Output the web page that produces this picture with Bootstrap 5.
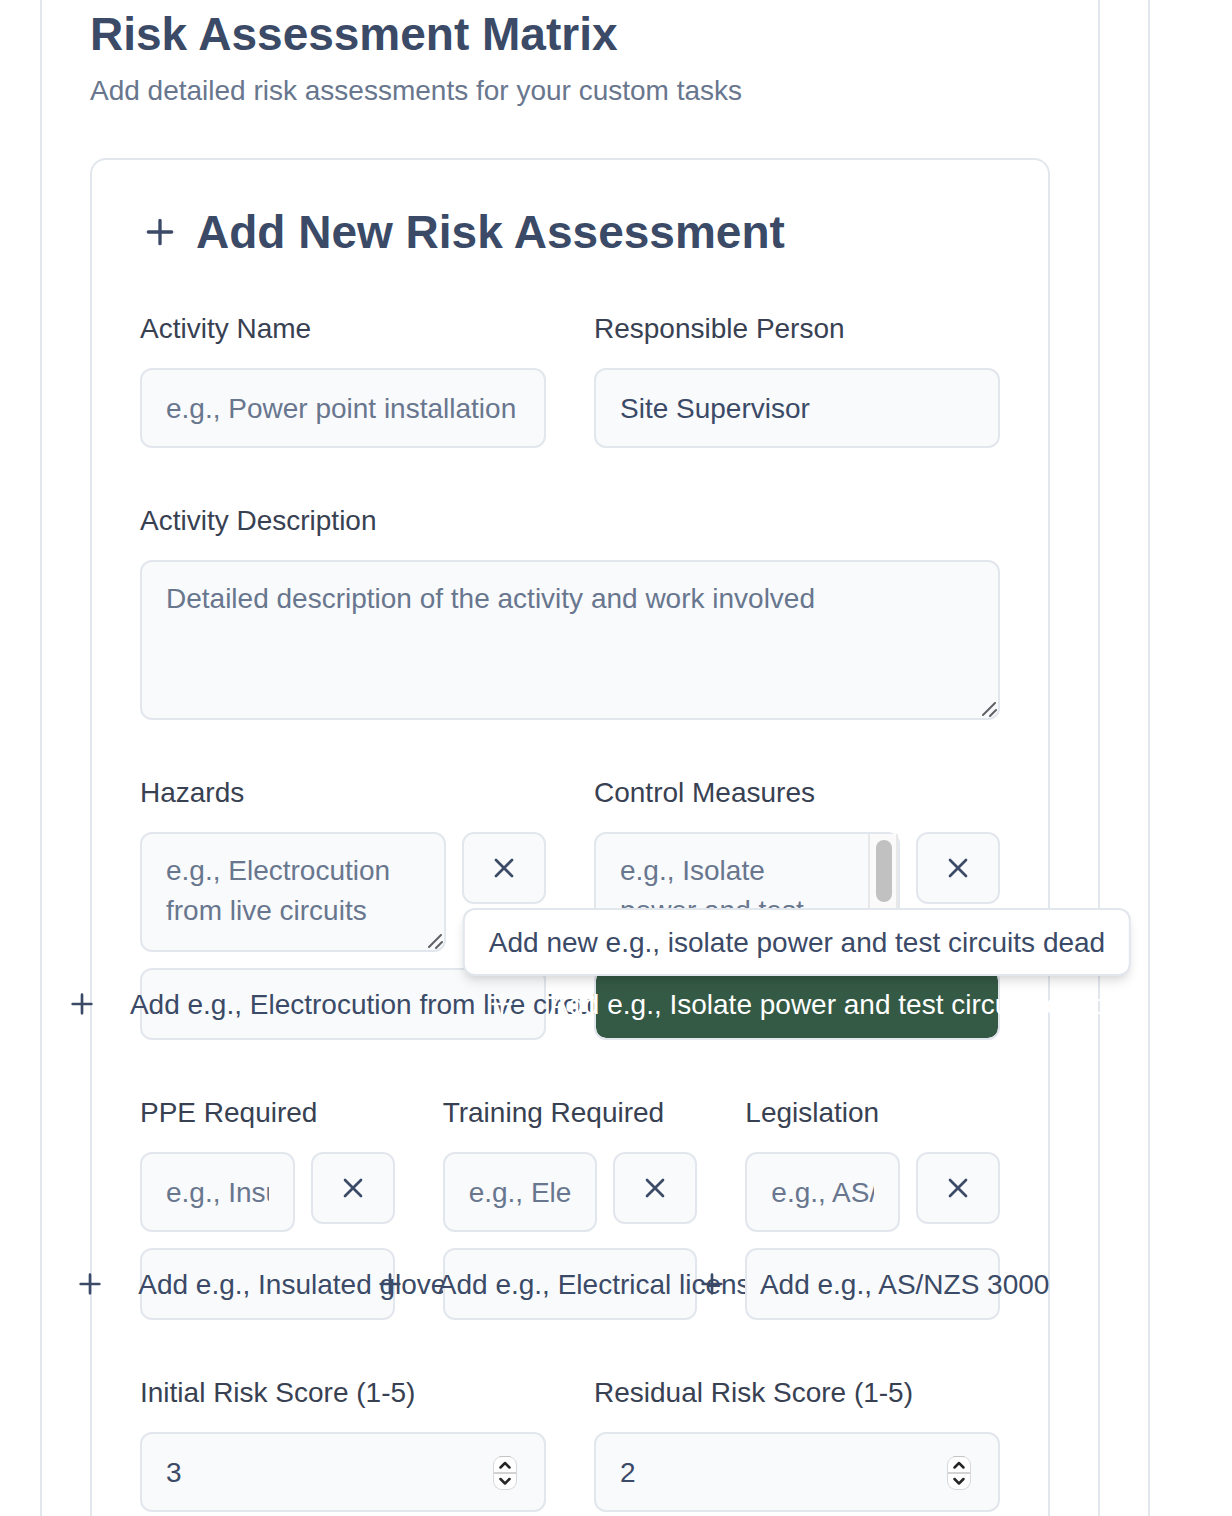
<!DOCTYPE html>
<html lang="en">
<head>
<meta charset="utf-8">
<meta name="viewport" content="width=device-width, initial-scale=1">
<title>Risk Assessment Matrix</title>
<link href="https://cdn.jsdelivr.net/npm/bootstrap@5.3.0/dist/css/bootstrap.min.css" rel="stylesheet">
<style>
  :root { --ink: #3b4a66; --label: #384152; --muted: #68768e; --line: #e2e6ed; --field: #f9fafc; --green: #345944; }
  body { font-family: "Liberation Sans", Arial, sans-serif; font-size: 28px; line-height: 40px; color: var(--ink); background: #fff; }
  .page-shell { min-height: 100vh; padding-right: 82px; }
  .outer-frame { border-right: 2px solid var(--line); padding: 0 48px 0 40px; }
  .inner-frame { border: solid var(--line); border-width: 0 2px; padding: 10px 48px 0; }
  .section-title { font-size: 46px; line-height: 48px; font-weight: 700; margin: 0; }
  .section-note { color: var(--muted); line-height: 42px; margin: 12px 0 46px; }
  .panel { border: 2px solid var(--line); border-bottom: 0; border-radius: 16px 16px 0 0; padding: 48px 48px 0; }
  .stack { display: flex; flex-direction: column; gap: 48px; }
  .gap-16 { gap: 16px; }
  .wide-row { --bs-gutter-x: 48px; }
  .field-label { display: block; color: var(--label); line-height: 50px; margin-bottom: 14px; }
  .field.form-control { font-size: 28px; line-height: 40px; color: var(--ink); background: var(--field); border: 2px solid var(--line); border-radius: 12px; padding: 20px 24px 18px; height: 80px; min-width: 0; }
  .field.form-control::placeholder { color: var(--muted); opacity: 1; }
  textarea.field.form-control { padding: 17px 24px 15px; resize: none; overflow: hidden; display: block; min-height: 0; }
  textarea.field.form-control.tall { height: 160px; }
  textarea.field.form-control.short { height: 120px; }
  textarea.field.form-control.scrolls { padding-right: 54px; }
  input[type=number].field { appearance: textfield; -moz-appearance: textfield; }
  input[type=number].field::-webkit-inner-spin-button { -webkit-appearance: none; margin: 0; }
  .soft.btn { font-size: 28px; line-height: 40px; color: var(--ink); background: var(--field); border: 2px solid var(--line); border-radius: 12px; height: 72px; padding: 0 24px; white-space: nowrap; background-clip: padding-box; }
  .remove.btn { width: 84px; flex: none; }
  .add.btn { display: flex; align-items: center; justify-content: center; gap: 32px; width: 100%; }
  .add.btn span { line-height: 38px; padding-top: 2px; }
  .add.is-hot.btn { background-color: var(--green); color: #fff; }
  .stroke { fill: none; stroke: currentColor; stroke-width: 2; stroke-linecap: round; stroke-linejoin: round; flex: none; display: block; }
  .grip { position: absolute; right: 2px; bottom: 2px; width: 16px; height: 16px; fill: none; stroke: #5f6164; stroke-width: 2; stroke-linecap: round; }
  .spinner { position: absolute; right: 28px; top: 22px; width: 26px; height: 38px; }
  .scroll-track { position: absolute; right: 2px; top: 2px; bottom: 2px; width: 30px; background: #fafafa; border: solid #e8e8e8; border-width: 0 2px; padding: 6px; }
  .scroll-thumb { height: 62px; width: 16px; margin: 0 auto; border-radius: 8px; background: #c1c1c1; }
  .hint { position: absolute; z-index: 10; left: 50%; bottom: 100%; transform: translateX(-50%); margin-bottom: -8px; white-space: nowrap; background: #fff; border: 2px solid var(--line); border-radius: 12px; padding: 13px 24px 11px; box-shadow: 0 8px 12px -2px rgba(0,0,0,.1), 0 4px 8px -4px rgba(0,0,0,.1); }
</style>
</head>
<body>
<svg width="0" height="0" class="position-absolute" aria-hidden="true">
  <symbol id="plus" viewBox="0 0 24 24"><path d="M5 12h14M12 5v14"/></symbol>
  <symbol id="cross" viewBox="0 0 24 24"><path d="M18 6 6 18M6 6l12 12"/></symbol>
  <symbol id="handle" viewBox="0 0 16 16"><path d="M1 13 13 1M8 14l6-6"/></symbol>
  <symbol id="steps" viewBox="0 0 26 38">
    <rect x="1" y="2" width="24" height="34" rx="9" fill="#d8d8da"/>
    <rect x="2" y="3" width="22" height="32" rx="8" fill="#fff"/>
    <path d="M8 2.500h10" stroke="#c4c4c6" stroke-linecap="round"/>
    <path d="M2 19h22" stroke="#d2d2d3" stroke-width="2"/>
    <path d="m8.500 13.500 4.500-4.500 4.500 4.500M8.500 25l4.500 4.500 4.500-4.500" fill="none" stroke="#262626" stroke-width="2.500" stroke-linecap="round" stroke-linejoin="round"/>
  </symbol>
</svg>
<div class="page-shell d-flex">
  <div class="outer-frame d-flex flex-fill">
    <main class="inner-frame d-flex flex-column flex-fill">
      <h2 class="section-title">Risk Assessment Matrix</h2>
      <p class="section-note">Add detailed risk assessments for your custom tasks</p>
      <form class="panel stack flex-fill">
        <div class="d-flex align-items-center gap-16">
          <svg class="stroke" width="40" height="40" aria-hidden="true"><use href="#plus"/></svg>
          <h3 class="section-title">Add New Risk Assessment</h3>
        </div>

        <div class="row wide-row">
          <div class="col-6">
            <label class="field-label" for="activity">Activity Name</label>
            <input class="field form-control" id="activity" type="text" placeholder="e.g., Power point installation">
          </div>
          <div class="col-6">
            <label class="field-label" for="person">Responsible Person</label>
            <input class="field form-control" id="person" type="text" value="Site Supervisor">
          </div>
        </div>

        <div>
          <label class="field-label" for="description">Activity Description</label>
          <div class="position-relative">
            <textarea class="field form-control tall" id="description" placeholder="Detailed description of the activity and work involved"></textarea>
            <svg class="grip" aria-hidden="true"><use href="#handle"/></svg>
          </div>
        </div>

        <div class="row wide-row">
          <div class="col-6">
            <label class="field-label" for="hazards">Hazards</label>
            <div class="d-flex flex-column gap-16">
              <div class="d-flex align-items-start gap-16">
                <div class="position-relative flex-fill">
                  <textarea class="field form-control short" id="hazards" placeholder="e.g., Electrocution from live circuits"></textarea>
                  <svg class="grip" aria-hidden="true"><use href="#handle"/></svg>
                </div>
                <button class="soft remove btn d-flex align-items-center justify-content-center" type="button" aria-label="Remove hazard"><svg class="stroke" width="32" height="32"><use href="#cross"/></svg></button>
              </div>
              <button class="soft add btn" type="button"><svg class="stroke" width="32" height="32"><use href="#plus"/></svg><span>Add e.g., Electrocution from live circuits</span></button>
            </div>
          </div>
          <div class="col-6">
            <label class="field-label" for="controls">Control Measures</label>
            <div class="d-flex flex-column gap-16">
              <div class="d-flex align-items-start gap-16">
                <div class="position-relative flex-fill">
                  <textarea class="field form-control short scrolls" id="controls" placeholder="e.g., Isolate power and test circuits dead"></textarea>
                  <div class="scroll-track" aria-hidden="true"><div class="scroll-thumb"></div></div>
                </div>
                <button class="soft remove btn d-flex align-items-center justify-content-center" type="button" aria-label="Remove control measure"><svg class="stroke" width="32" height="32"><use href="#cross"/></svg></button>
              </div>
              <div class="position-relative">
                <button class="soft add is-hot btn" type="button" aria-describedby="add-hint"><svg class="stroke" width="32" height="32"><use href="#plus"/></svg><span>Add e.g., Isolate power and test circuits dead</span></button>
                <div class="hint" id="add-hint" role="tooltip">Add new e.g., isolate power and test circuits dead</div>
              </div>
            </div>
          </div>
        </div>

        <div class="row wide-row">
          <div class="col-4">
            <label class="field-label" for="ppe">PPE Required</label>
            <div class="d-flex flex-column gap-16">
              <div class="d-flex align-items-start gap-16">
                <input class="field form-control" id="ppe" type="text" placeholder="e.g., Insulated gloves">
                <button class="soft remove btn d-flex align-items-center justify-content-center" type="button" aria-label="Remove PPE"><svg class="stroke" width="32" height="32"><use href="#cross"/></svg></button>
              </div>
              <button class="soft add btn" type="button"><svg class="stroke" width="32" height="32"><use href="#plus"/></svg><span>Add e.g., Insulated gloves</span></button>
            </div>
          </div>
          <div class="col-4">
            <label class="field-label" for="training">Training Required</label>
            <div class="d-flex flex-column gap-16">
              <div class="d-flex align-items-start gap-16">
                <input class="field form-control" id="training" type="text" placeholder="e.g., Electrical license">
                <button class="soft remove btn d-flex align-items-center justify-content-center" type="button" aria-label="Remove training"><svg class="stroke" width="32" height="32"><use href="#cross"/></svg></button>
              </div>
              <button class="soft add btn" type="button"><svg class="stroke" width="32" height="32"><use href="#plus"/></svg><span>Add e.g., Electrical license</span></button>
            </div>
          </div>
          <div class="col-4">
            <label class="field-label" for="legislation">Legislation</label>
            <div class="d-flex flex-column gap-16">
              <div class="d-flex align-items-start gap-16">
                <input class="field form-control" id="legislation" type="text" placeholder="e.g., AS/NZS 3000">
                <button class="soft remove btn d-flex align-items-center justify-content-center" type="button" aria-label="Remove legislation"><svg class="stroke" width="32" height="32"><use href="#cross"/></svg></button>
              </div>
              <button class="soft add btn" type="button"><svg class="stroke" width="32" height="32"><use href="#plus"/></svg><span>Add e.g., AS/NZS 3000</span></button>
            </div>
          </div>
        </div>

        <div class="row wide-row">
          <div class="col-6">
            <label class="field-label" for="initial">Initial Risk Score (1-5)</label>
            <div class="position-relative">
              <input class="field form-control" id="initial" type="number" min="1" max="5" value="3">
              <svg class="spinner" aria-hidden="true"><use href="#steps"/></svg>
            </div>
          </div>
          <div class="col-6">
            <label class="field-label" for="residual">Residual Risk Score (1-5)</label>
            <div class="position-relative">
              <input class="field form-control" id="residual" type="number" min="1" max="5" value="2">
              <svg class="spinner" aria-hidden="true"><use href="#steps"/></svg>
            </div>
          </div>
        </div>
      </form>
    </main>
  </div>
</div>
<script src="https://cdn.jsdelivr.net/npm/bootstrap@5.3.0/dist/js/bootstrap.bundle.min.js"></script>
</body>
</html>
